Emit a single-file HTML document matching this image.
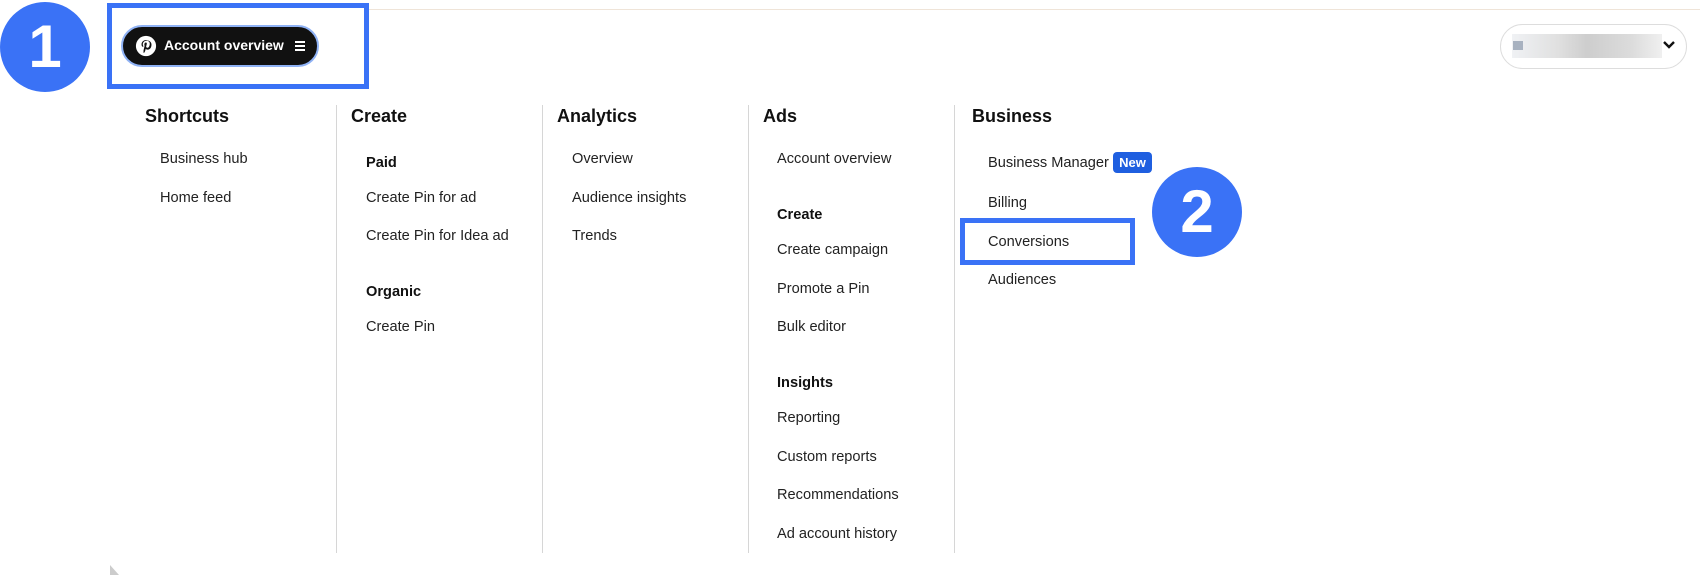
<!DOCTYPE html>
<html><head><meta charset="utf-8"><style>
body{margin:0;width:1700px;height:577px;background:#fff;position:relative;overflow:hidden;font-family:"Liberation Sans",Arial,sans-serif;color:#111}
.a{position:absolute;white-space:nowrap}
.h{font-size:18px;font-weight:bold;color:#111}
.i{font-size:14.6px;color:#222}
.s{font-size:14.6px;font-weight:bold;color:#111}
.sep{position:absolute;top:105px;height:448px;width:1px;background:#d6d6d6}
.circ{position:absolute;width:90px;height:90px;border-radius:50%;background:#3a72f6;color:#fff;font-size:60px;font-weight:bold;text-align:center;line-height:90px;font-family:"Liberation Sans",sans-serif}
</style></head><body>
<div class="a" style="left:369px;top:9px;width:1331px;height:1px;background:#efe4d8"></div>
<div class="circ" style="left:0;top:2px">1</div>
<div class="a" style="left:107px;top:3px;width:252px;height:76px;border:5px solid #3a72f6"></div>
<div class="a" style="left:121px;top:25px;width:194px;height:38px;border-radius:21px;background:#111;border:2px solid #8fb2f5"></div>
<svg class="a" style="left:135px;top:35px" width="22" height="22" viewBox="0 0 24 24"><circle cx="12" cy="12" r="11" fill="#fff"/><path d="M12.5 5.5c-3.6 0-5.4 2.6-5.4 4.7 0 1.3.5 2.4 1.5 2.8.2.1.3 0 .4-.2l.1-.6c.1-.2 0-.3-.1-.4-.3-.4-.5-.9-.5-1.6 0-2.1 1.6-3.9 4.1-3.9 2.2 0 3.5 1.4 3.5 3.2 0 2.4-1.1 4.4-2.6 4.4-.9 0-1.5-.7-1.300-1.600.2-1 .7-2.2.7-2.9 0-.7-.4-1.2-1.1-1.2-.9 0-1.6.9-1.6 2.2 0 .8.3 1.3.3 1.3l-1.1 4.6c-.3 1.4 0 3 0 3.2.3.1.4.1.5 0 .1-.1 1-1.3 1.3-2.5l.5-2c.3.5 1.1 1 2 1 2.6 0 4.3-2.4 4.3-5.5 0-2.4-2-4.6-5.1-4.6z" fill="#111"/></svg>
<div class="a" style="left:164px;top:37px;font-size:14px;font-weight:bold;color:#fff">Account overview</div>
<div class="a" style="left:295px;top:41px;width:10px;height:2px;background:#fff;box-shadow:0 4px 0 #fff,0 8px 0 #fff"></div>
<div class="a" style="left:1500px;top:24px;width:185px;height:43px;border:1px solid #ddd;border-radius:23px;background:#fff"></div>
<div class="a" style="left:1512px;top:34px;width:150px;height:24px;background:linear-gradient(90deg,#eef0f3,#ddd 30%,#c8c8c8 50%,#d8d8d8 80%,#eee);opacity:.9"></div>
<div class="a" style="left:1513px;top:41px;width:10px;height:9px;background:#a8b2c0"></div>
<svg class="a" style="left:1662px;top:40px" width="14" height="10" viewBox="0 0 14 10"><path d="M2 2l5 5 5-5" stroke="#111" stroke-width="2.4" fill="none"/></svg>

<div class="sep" style="left:336px"></div><div class="sep" style="left:542px"></div><div class="sep" style="left:748px"></div><div class="sep" style="left:954px"></div>

<div class="a h" style="left:145px;top:106px">Shortcuts</div>
<div class="a i" style="left:160px;top:151px">Business hub</div>
<div class="a i" style="left:160px;top:190px">Home feed</div>

<div class="a h" style="left:351px;top:106px">Create</div>
<div class="a s" style="left:366px;top:155px">Paid</div>
<div class="a i" style="left:366px;top:190px">Create Pin for ad</div>
<div class="a i" style="left:366px;top:228px">Create Pin for Idea ad</div>
<div class="a s" style="left:366px;top:284px">Organic</div>
<div class="a i" style="left:366px;top:319px">Create Pin</div>

<div class="a h" style="left:557px;top:106px">Analytics</div>
<div class="a i" style="left:572px;top:151px">Overview</div>
<div class="a i" style="left:572px;top:190px">Audience insights</div>
<div class="a i" style="left:572px;top:228px">Trends</div>

<div class="a h" style="left:763px;top:106px">Ads</div>
<div class="a i" style="left:777px;top:151px">Account overview</div>
<div class="a s" style="left:777px;top:207px">Create</div>
<div class="a i" style="left:777px;top:242px">Create campaign</div>
<div class="a i" style="left:777px;top:281px">Promote a Pin</div>
<div class="a i" style="left:777px;top:319px">Bulk editor</div>
<div class="a s" style="left:777px;top:375px">Insights</div>
<div class="a i" style="left:777px;top:410px">Reporting</div>
<div class="a i" style="left:777px;top:449px">Custom reports</div>
<div class="a i" style="left:777px;top:487px">Recommendations</div>
<div class="a i" style="left:777px;top:526px">Ad account history</div>

<div class="a h" style="left:972px;top:106px">Business</div>
<div class="a i" style="left:988px;top:155px">Business Manager</div>
<div class="a" style="left:1113px;top:152px;width:39px;height:21px;background:#1f5fe0;border-radius:4px;color:#fff;font-size:13px;font-weight:bold;text-align:center;line-height:21px">New</div>
<div class="a i" style="left:988px;top:195px">Billing</div>
<div class="a i" style="left:988px;top:234px">Conversions</div>
<div class="a i" style="left:988px;top:272px">Audiences</div>
<div class="a" style="left:960px;top:218px;width:165px;height:37px;border:5px solid #3a72f6"></div>
<div class="circ" style="left:1152px;top:167px">2</div>
<svg class="a" style="left:110px;top:565px" width="10" height="10"><path d="M0 0L0 10L9 10Z" fill="#ccc"/></svg>
</body></html>
